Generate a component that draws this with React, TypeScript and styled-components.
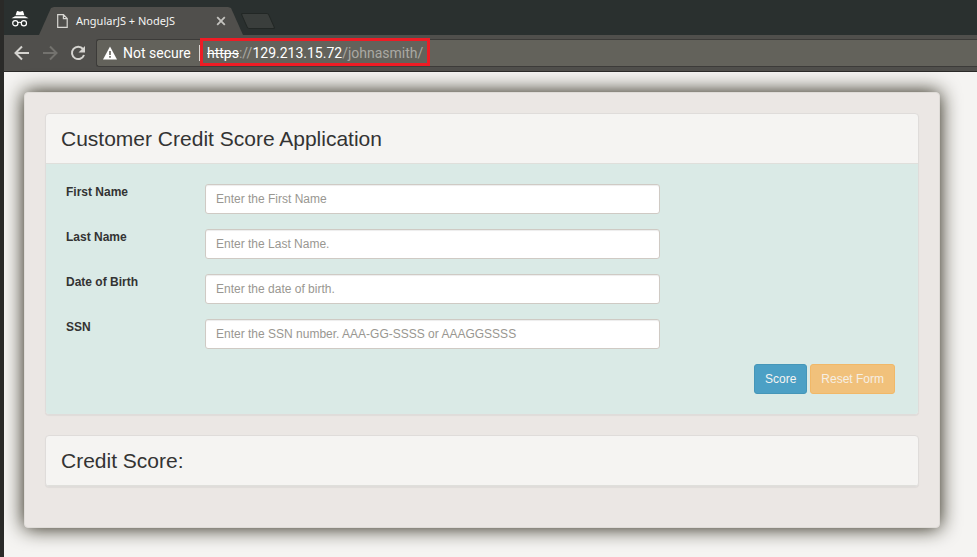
import React from "react";
import styled, { createGlobalStyle } from "styled-components";

const GlobalStyle = createGlobalStyle`
  * { box-sizing: border-box; }
  html { height: 100%; }
  body {
    margin: 0;
    min-height: 100%;
    background: #f5f4f2;
    color: #333;
    font: 12px/15px "Liberation Sans", Arial, sans-serif;
  }
`;

const BrowserWindow = styled.div`
  min-height: 100vh;
  display: flex;
  flex-direction: column;
  border-left: 4px solid #2a2a28;
`;

const TabStrip = styled.header`
  display: flex;
  align-items: flex-end;
  height: 35px;
  background: #2a302f;
  font: 11px/16px "Noto Sans", "Open Sans", sans-serif;
`;

const Incognito = styled.svg`
  width: 18px;
  height: 18px;
  margin: 0 10px 7px 7px;
  flex: none;
`;

const Tab = styled.div`
  display: flex;
  align-items: center;
  width: 204px;
  height: 28px;
  padding: 0 17px 0 18px;
  color: #f4f4f2;
  background: #504f4c;
  clip-path: polygon(0 100%, 12px 1px, 15px 0, 189px 0, 192px 1px, 100% 100%);
`;

const TabTitle = styled.span`
  flex: 1;
  margin-left: 8px;
  white-space: nowrap;
`;

const TabClose = styled.button`
  display: flex;
  padding: 0;
  border: 0;
  background: none;
`;

const NewTab = styled.button`
  width: 28px;
  height: 16px;
  margin: 0 0 6px 1px;
  padding: 0;
  border: 1px solid #222725;
  border-radius: 2px;
  background: #3a3e3c;
  transform: skewX(24deg);
`;

const Toolbar = styled.nav`
  display: flex;
  align-items: center;
  gap: 8px;
  height: 37px;
  padding-left: 8px;
  border-bottom: 1px solid #2b2a28;
  background: #504f4c;
`;

const NavButton = styled.button`
  display: flex;
  padding: 0;
  border: 0;
  background: none;
  color: #d5d4d0;

  &:disabled { color: #73726e; }
`;

const AddressBar = styled.div`
  display: flex;
  flex: 1;
  align-items: center;
  height: 28px;
  padding-left: 6px;
  border: 1px solid #3c3b39;
  border-right: 0;
  border-radius: 3px 0 0 3px;
  background: #63625b;
  color: #fff;
  font: 14px/20px Roboto, "Noto Sans", sans-serif;
  white-space: nowrap;
`;

const Security = styled.span`
  width: 76px;
  margin-left: 6px;
`;

const Divider = styled.span`
  width: 1px;
  height: 16px;
  background: #d9d8d4;
`;

const Address = styled.span`
  display: flex;
  align-items: center;
  height: 28px;
  margin-bottom: 2px;
  padding: 2px 4px 0;
  border: 3px solid #ee1c25;
`;

const Scheme = styled.s`
  text-decoration-thickness: 1px;
`;

const Muted = styled.span`
  color: #aaa9a3;
`;

const Page = styled.main`
  flex: 1;
  padding: 20px 37px 29px 20px;
`;

const Card = styled.div`
  padding: 20px;
  border: 1px solid #dfdcd8;
  border-radius: 4px;
  background: #ebe7e4;
  box-shadow: 0 0 20px #1c1808;
`;

const Panel = styled.section`
  margin-bottom: 20px;
  border: 1px solid #dfdcda;
  border-radius: 4px;
  background: #f5f4f2;
  box-shadow: 0 1px 1px rgba(0, 0, 0, 0.05);
  overflow: hidden;
`;

const PanelTitle = styled.h2`
  margin: 0;
  padding: 10px 15px;
  border-bottom: 1px solid #dfdfdb;
  font-size: 21px;
  font-weight: 400;
  line-height: 29px;
`;

const Form = styled.form`
  display: flex;
  flex-direction: column;
  gap: 15px;
  padding: 20px;
  background: #daeae6;
`;

const Field = styled.div`
  display: flex;
  align-items: flex-start;
`;

const Label = styled.label`
  flex: none;
  width: 139px;
  font-weight: 700;
  line-height: 17px;
`;

const TextInput = styled.input`
  flex: 0 1 455px;
  min-width: 0;
  height: 30px;
  padding: 5px 10px;
  border: 1px solid #cfcac4;
  border-radius: 3px;
  background: #fff;
  box-shadow: inset 0 1px 1px rgba(0, 0, 0, 0.075);
  color: #333;
  font: inherit;

  &::placeholder { color: #999791; opacity: 1; }
`;

const Actions = styled.div`
  display: flex;
  justify-content: flex-end;
  gap: 3px;
  padding-right: 3px;
`;

const Button = styled.button<{ $tone: "primary" | "warning" }>`
  height: 30px;
  padding: 0 10px;
  border: 1px solid ${(p) => (p.$tone === "primary" ? "#4596b8" : "#f1b868")};
  border-radius: 3px;
  background: ${(p) => (p.$tone === "primary" ? "#4ca0c5" : "#f1c17b")};
  color: ${(p) => (p.$tone === "primary" ? "#f5f4f2" : "#f6efe4")};
  font: inherit;
`;

const fields = [
  { id: "firstName", label: "First Name", hint: "Enter the First Name" },
  { id: "lastName", label: "Last Name", hint: "Enter the Last Name." },
  { id: "birthDate", label: "Date of Birth", hint: "Enter the date of birth." },
  { id: "ssn", label: "SSN", hint: "Enter the SSN number. AAA-GG-SSSS or AAAGGSSSS" },
];

export default function App() {
  return (
    <>
      <GlobalStyle />
      <BrowserWindow>
        <TabStrip>
          <Incognito viewBox="0 0 18 18" aria-hidden="true">
            <path d="M4.6 5.2 5.8 1.4Q6 1 6.5 1.1L9 1.8l2.5-.7q.5-.1.7.3l1.2 3.8z" fill="#fff" />
            <path d="M.5 8.2 4 6.2h10l3.5 2z" fill="#fff" />
            <g fill="none" stroke="#fff" strokeWidth="1.2">
              <circle cx="4.3" cy="13.2" r="2.6" />
              <circle cx="12.9" cy="13.2" r="2.6" />
              <path d="M6.9 12.7q1.7-.9 3.4 0" />
            </g>
          </Incognito>
          <Tab>
            <svg width="11" height="14" viewBox="0 0 11 14" fill="none" stroke="#d8d7d3" strokeWidth="1.2" aria-hidden="true">
              <path d="M.7.7h5.8l3.7 3.8v8.8H.7zM6.4.9v3.8h3.7" />
            </svg>
            <TabTitle>AngularJS + NodeJS</TabTitle>
            <TabClose aria-label="Close tab">
              <svg width="10" height="10" viewBox="0 0 10 10" stroke="#c4c3bf" strokeWidth="1.8">
                <path d="m1.2 1.2 7.6 7.6m0-7.6L1.2 8.8" />
              </svg>
            </TabClose>
          </Tab>
          <NewTab aria-label="New tab" />
        </TabStrip>
        <Toolbar>
          <NavButton aria-label="Back">
            <svg width="20" height="20" viewBox="0 0 20 20" fill="none" stroke="currentColor" strokeWidth="2">
              <path d="M17 10H4.5M10 3.5 3.5 10l6.5 6.5" />
            </svg>
          </NavButton>
          <NavButton aria-label="Forward" disabled>
            <svg width="20" height="20" viewBox="0 0 20 20" fill="none" stroke="currentColor" strokeWidth="2">
              <path d="M3 10h12.5M10 3.5l6.5 6.5-6.5 6.5" />
            </svg>
          </NavButton>
          <NavButton aria-label="Reload">
            <svg width="20" height="20" viewBox="0 0 20 20" fill="none" stroke="currentColor" strokeWidth="2">
              <path d="M15 6A6.2 6.2 0 1 0 16 12" />
              <path d="M17 3v6.5h-6.5z" fill="currentColor" stroke="none" />
            </svg>
          </NavButton>
          <AddressBar>
            <svg width="14" height="14" viewBox="0 0 14 14" aria-hidden="true">
              <path d="M7 .5 14 13.5H0z" fill="#fff" />
              <path d="M6.2 5h1.6v4H6.2zm0 5h1.6v1.7H6.2z" fill="#63625b" />
            </svg>
            <Security>Not secure</Security>
            <Divider />
            <Address>
              <Scheme>https</Scheme>
              <Muted>://</Muted>
              <span>129.213.15.72</span>
              <Muted>/johnasmith/</Muted>
            </Address>
          </AddressBar>
        </Toolbar>
        <Page>
          <Card>
            <Panel>
              <PanelTitle as="h1">Customer Credit Score Application</PanelTitle>
              <Form>
                {fields.map((f) => (
                  <Field key={f.id}>
                    <Label htmlFor={f.id}>{f.label}</Label>
                    <TextInput id={f.id} type="text" placeholder={f.hint} />
                  </Field>
                ))}
                <Actions>
                  <Button type="button" $tone="primary">Score</Button>
                  <Button type="reset" $tone="warning">Reset Form</Button>
                </Actions>
              </Form>
            </Panel>
            <Panel>
              <PanelTitle>Credit Score:</PanelTitle>
            </Panel>
          </Card>
        </Page>
      </BrowserWindow>
    </>
  );
}
